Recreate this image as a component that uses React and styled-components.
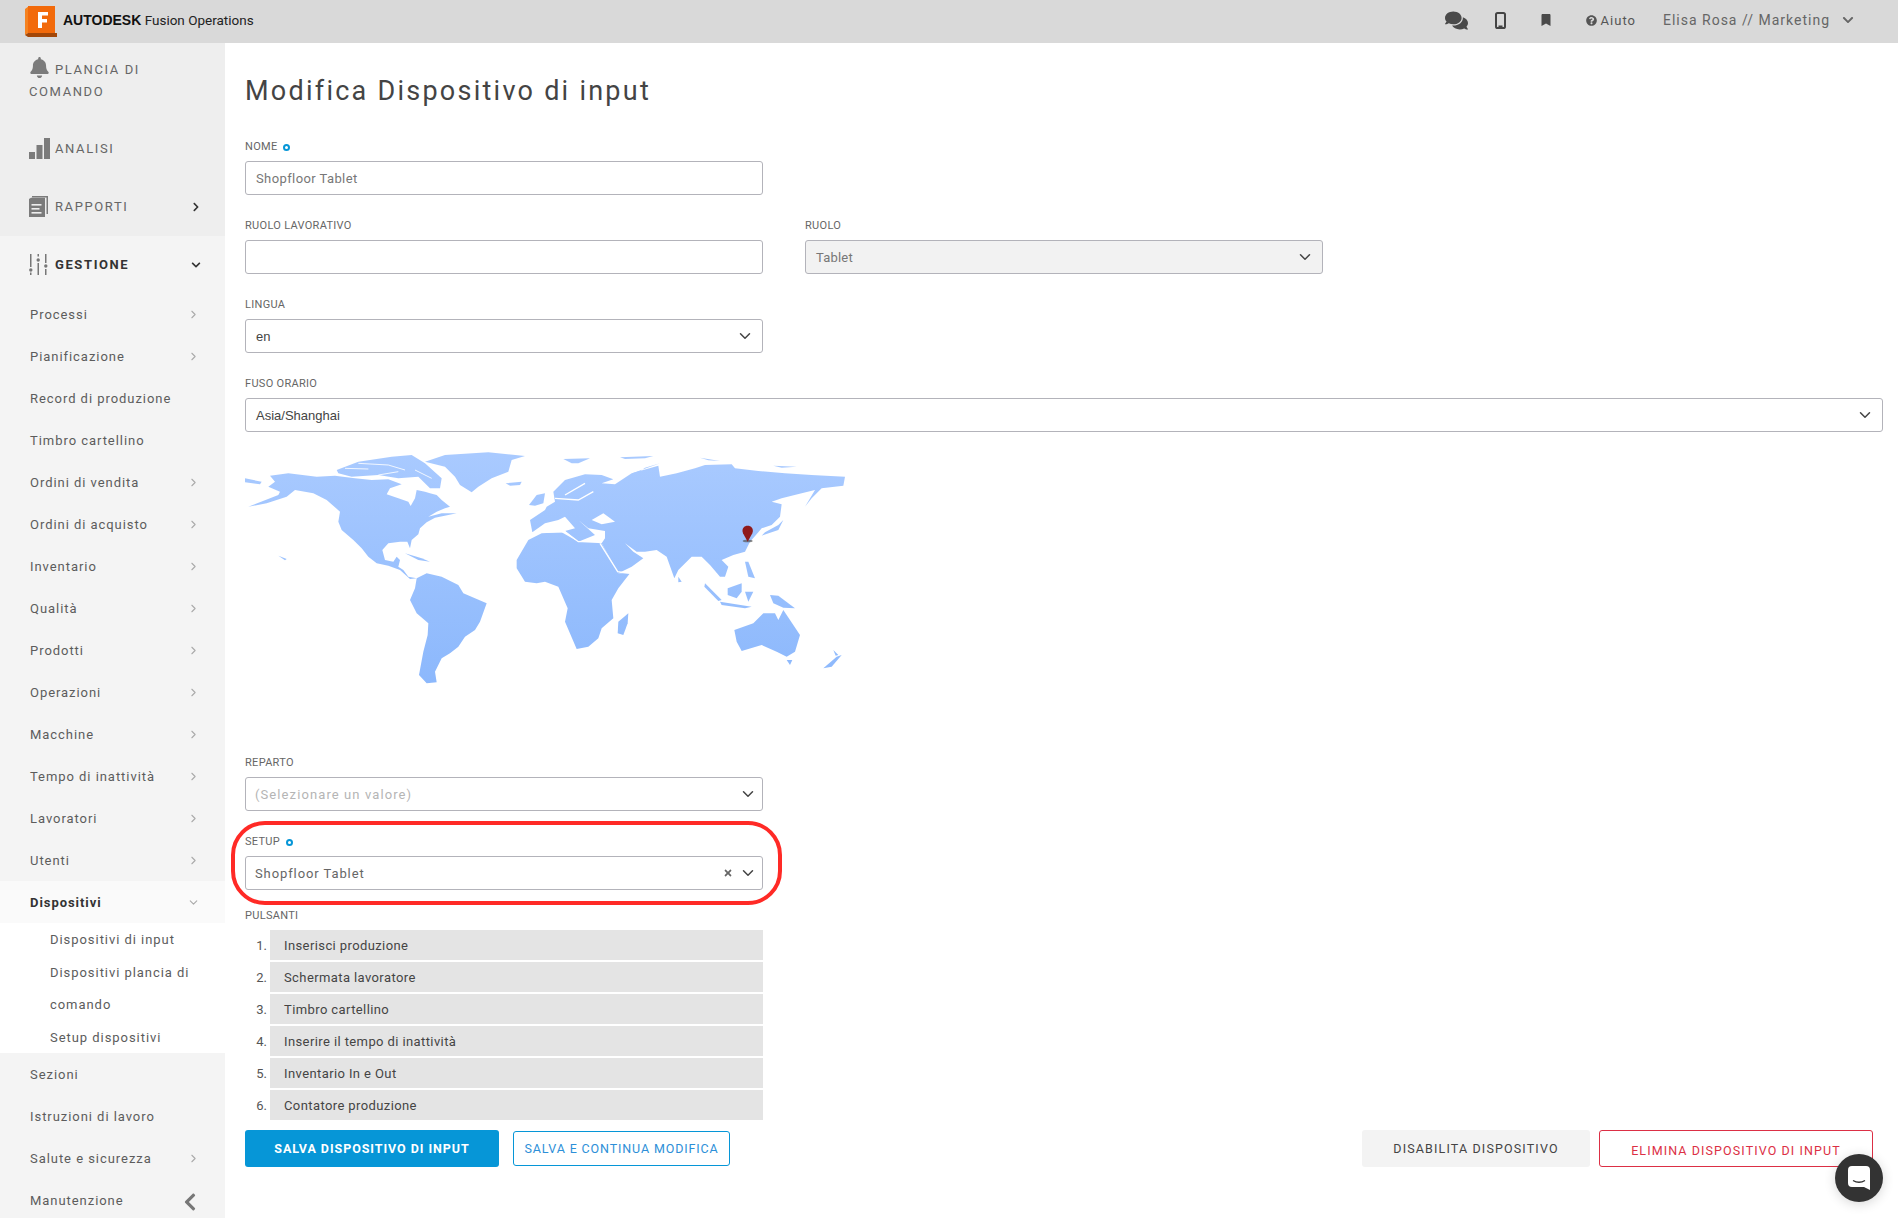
import styled, { createGlobalStyle } from 'styled-components'
import { FaBell, FaBookmark, FaChevronDown, FaChevronLeft, FaChevronRight, FaComments, FaQuestionCircle, FaTimes } from 'react-icons/fa'
import { FiChevronDown, FiChevronRight } from 'react-icons/fi'

const GlobalStyle = createGlobalStyle`
  html, body {
    margin: 0;
    padding: 0;
    background: #fff;
    font-family: 'Roboto', 'Noto Sans', sans-serif;
    color: #555;
  }
  * { box-sizing: border-box; }
`

const Page = styled.div`
  width: 1898px;
  height: 1218px;
  overflow: hidden;
  position: relative;
  display: flex;
  flex-direction: column;
`

const TopBar = styled.header`
  height: 43px;
  flex: none;
  background: #d9d9d9;
  display: flex;
  align-items: center;
  padding-left: 25px;
`

const Brand = styled.div`
  display: flex;
  align-items: center;
  gap: 5px;
  font-size: 13.5px;
  color: #222;
`

const BrandText = styled.span`
  margin-top: -3px;
`

const BrandName = styled.span`
  font-family: 'Liberation Sans', sans-serif;
  font-weight: 700;
  font-size: 14px;
  color: #111;
`

const TopActions = styled.div`
  margin-left: auto;
  display: flex;
  align-items: center;
  color: #4a4a4a;
  padding: 0 44px 3px 0;
`

const TopIcon = styled.span`
  display: flex;
  margin-right: ${(p) => p.$gap}px;
`

const HelpLink = styled.span`
  display: flex;
  align-items: center;
  gap: 4px;
  font-size: 13px;
  letter-spacing: 1px;
  color: #555;
  margin-right: 27px;
`

const UserMenu = styled.span`
  display: flex;
  align-items: center;
  gap: 12px;
  font-size: 14px;
  letter-spacing: 1px;
  color: #666;
`

const Body = styled.div`
  flex: 1;
  display: flex;
  min-height: 0;
`

const Sidebar = styled.nav`
  width: 225px;
  flex: none;
  background: #f4f4f4;
  overflow: hidden;
`

const TopGroup = styled.div`
  background: #eeeeee;
  height: 193px;
`

const MainItem = styled.div`
  height: ${(p) => p.$height}px;
  padding: ${(p) => p.$top}px 20px 0 29px;
  display: flex;
  align-items: center;
  gap: 5px;
  font-size: 13px;
  letter-spacing: 1.6px;
  color: ${(p) => (p.$active ? '#333' : '#666')};
  font-weight: ${(p) => (p.$active ? 700 : 400)};
`

const IconSlot = styled.span`
  width: 21px;
  flex: none;
  display: flex;
`

const WrappedItem = styled.div`
  height: 82px;
  padding: 14px 20px 0 29px;
  font-size: 13px;
  line-height: 22px;
  letter-spacing: 1.6px;
  color: #666;

  svg {
    vertical-align: -4px;
    margin-right: 5px;
  }
`

const ItemEnd = styled.span`
  margin-left: auto;
  display: flex;
  color: #333;
  padding-right: 4px;
`

const SubItem = styled.div`
  height: 42px;
  display: flex;
  align-items: center;
  padding: 0 25px 0 30px;
  font-size: 13px;
  letter-spacing: 0.95px;
  font-weight: ${(p) => (p.$active ? 700 : 400)};
  color: ${(p) => (p.$active ? '#333' : '#5c5c5c')};
  background: ${(p) => (p.$active ? '#fafafa' : 'transparent')};
`

const SubEnd = styled.span`
  margin-left: auto;
  display: flex;
  color: #aaa;
`

const Submenu = styled.div`
  background: #fff;
  padding: 1px 20px 0 50px;
  height: 130px;
`

const SubLink = styled.div`
  font-size: 13px;
  line-height: 32.5px;
  letter-spacing: 0.95px;
  color: #5c5c5c;
`

const CollapseButton = styled.span`
  position: absolute;
  left: 180px;
  top: 1192px;
  color: #777;
  display: flex;
`

const Main = styled.main`
  flex: 1;
  min-width: 0;
  padding: 31px 15px 0 20px;
`

const Title = styled.h1`
  margin: 0 0 28px;
  font-size: 27px;
  line-height: 34px;
  font-weight: 400;
  letter-spacing: 2.25px;
  color: #444;
`

const Row = styled.div`
  display: grid;
  grid-template-columns: 518px 518px;
  column-gap: 42px;
`

const Field = styled.div`
  width: ${(p) => (p.$wide ? '100%' : '518px')};
  margin-bottom: ${(p) => p.$after ?? 20}px;
`

const Label = styled.div`
  height: 25px;
  padding: 4px 0 7px;
  font-size: 11px;
  line-height: 14px;
  letter-spacing: 0.3px;
  color: #666;
  display: flex;
  gap: 6px;
  align-items: center;
`

const Required = styled.i`
  width: 7px;
  height: 7px;
  border-radius: 50%;
  border: 2px solid #0696d7;
`

const Control = styled.div`
  height: 34px;
  border: 1px solid #b3b3ba;
  border-radius: 3px;
  background: ${(p) => (p.$disabled ? '#f2f2f2' : '#fff')};
  display: flex;
  align-items: center;
  padding: ${(p) => (p.$tight ? '0 5px 0 9px' : '0 8px 0 10px')};
  font-size: 13px;
  letter-spacing: ${(p) => p.$track ?? 0}px;
  font-family: ${(p) => (p.$plain ? "'Liberation Sans', sans-serif" : 'inherit')};
  color: ${(p) => p.$color ?? '#777'};
`

const ControlEnd = styled.span`
  margin-left: auto;
  display: flex;
  align-items: center;
  gap: 6px;
  color: #444;
`

const ClearIcon = styled.span`
  display: flex;
  color: #666;
`

const MapBox = styled.div`
  width: 600px;
  height: 250px;
  margin-bottom: 57px;
`

const Highlighted = styled.div`
  position: relative;
  width: 518px;

  &::after {
    content: '';
    position: absolute;
    inset: -10px -19px -15px -14px;
    border: 4px solid #ff2a26;
    border-radius: 34px;
    pointer-events: none;
  }
`

const ButtonList = styled.ol`
  list-style: none;
  margin: 0;
  padding: 0;
  width: 518px;
  display: flex;
  flex-direction: column;
  gap: 2px;
`

const ButtonRow = styled.li`
  display: grid;
  grid-template-columns: 25px 1fr;
  height: 30px;
`

const RowNumber = styled.span`
  display: flex;
  align-items: center;
  justify-content: flex-end;
  padding-right: 3px;
  font-size: 13px;
  color: #555;
`

const RowName = styled.span`
  display: flex;
  align-items: center;
  background: #e4e4e4;
  padding-left: 14px;
  font-size: 13px;
  letter-spacing: 0.4px;
  color: #444;
`

const Actions = styled.div`
  margin: 10px 10px 0 0;
  display: flex;
  align-items: center;
`

const Button = styled.button`
  height: ${(p) => p.$h ?? 37}px;
  width: ${(p) => p.$w}px;
  margin-right: ${(p) => p.$after ?? 0}px;
  margin-left: ${(p) => (p.$push ? 'auto' : '0')};
  padding: ${(p) => p.$drop ?? 0}px 0 0;
  border-radius: 3px;
  border: 1px solid ${(p) => p.$border ?? 'transparent'};
  background: ${(p) => p.$bg ?? '#fff'};
  color: ${(p) => p.$color};
  font-family: inherit;
  font-size: 12.5px;
  font-weight: ${(p) => p.$weight ?? 400};
  letter-spacing: ${(p) => p.$track}px;
`

const ChatBubble = styled.div`
  position: absolute;
  left: 1835px;
  top: 1154px;
  width: 48px;
  height: 48px;
  border-radius: 50%;
  background: #333;
  box-shadow: 0 2px 12px rgba(0, 0, 0, 0.16);
  display: flex;
  align-items: center;
  justify-content: center;
`

function LogoMark() {
  return (
    <svg width="33" height="31" viewBox="0 0 33 31">
      <path d="M0 3 L4 0 H30 V27 H3 L0 29 Z" fill="#f58220" />
      <path d="M3 27 H32 V31 H3 L0 29 Z" fill="#a34708" />
      <rect x="3" y="0" width="27" height="27" fill="#f26a0b" />
      <path d="M13 6 H23 V9.5 H17 V13 H22 V16.5 H17 V22 H13 Z" fill="#fff" />
    </svg>
  )
}

function PhoneIcon() {
  return (
    <svg width="11" height="17" viewBox="0 0 11 17">
      <rect x="1" y="1" width="9" height="15" rx="1.6" fill="none" stroke="#444" strokeWidth="2" />
      <rect x="3.5" y="13.5" width="4" height="2" fill="#444" />
    </svg>
  )
}

function BarsIcon() {
  return (
    <svg width="21" height="21" viewBox="0 0 21 21" fill="#7b7b7b">
      <rect x="0" y="14" width="6" height="7" />
      <rect x="7.5" y="7" width="6" height="14" />
      <rect x="15" y="0" width="6" height="21" />
    </svg>
  )
}

function ReportIcon() {
  return (
    <svg width="19" height="21" viewBox="0 0 19 21" fill="#7b7b7b">
      <path d="M3 0 H19 V18 H17.5 V1.5 H3 Z" />
      <path d="M0 3 L2 1.8 H16 V21 H0 Z" />
      <rect x="2.5" y="8" width="10" height="1.6" fill="#eee" />
      <rect x="2.5" y="12" width="8" height="1.6" fill="#eee" />
      <rect x="2.5" y="16" width="10" height="1.6" fill="#eee" />
    </svg>
  )
}

function SlidersIcon() {
  return (
    <svg width="19" height="21" viewBox="0 0 19 21" fill="#777">
      <rect x="1" y="0" width="1.5" height="13" />
      <circle cx="1.8" cy="16" r="1.7" />
      <rect x="1" y="18.5" width="1.5" height="2.5" />
      <rect x="8.5" y="0" width="1.5" height="2.5" />
      <circle cx="9.2" cy="6" r="1.7" />
      <rect x="8.5" y="9" width="1.5" height="12" />
      <rect x="16" y="0" width="1.5" height="9" />
      <circle cx="16.8" cy="12" r="1.7" />
      <rect x="16" y="15" width="1.5" height="6" />
    </svg>
  )
}

function WorldMap() {
  // traced by hand from two 3x crops, the eastern half sits in its own group
  return (
    <svg width="600" height="250" viewBox="0 0 1800 750">
      <defs>
        <linearGradient id="land" gradientUnits="userSpaceOnUse" x1="0" y1="30" x2="0" y2="715">
          <stop offset="0" stopColor="#a9caff" />
          <stop offset="1" stopColor="#8cb8fc" />
        </linearGradient>
      </defs>
      <g fill="url(#land)">
        <path d="M75 92 L130 85 L215 95 L270 92 L330 100 L380 105 L430 103 L470 118 L435 130 L425 148 L460 160 L490 170 L497 183 L510 160 L515 135 L540 140 L555 145 L575 150 L590 165 L615 185 L600 190 L575 200 L550 215 L590 205 L635 205 L610 210 L570 218 L545 232 L525 250 L520 268 L500 285 L495 310 L487 290 L465 290 L430 295 L412 315 L420 345 L445 350 L455 335 L465 345 L460 365 L475 375 L490 395 L515 400 L495 402 L465 375 L430 362 L395 355 L370 335 L350 310 L325 285 L290 255 L280 230 L285 200 L245 165 L205 145 L150 135 L125 155 L65 175 L10 185 L100 150 L105 140 L70 125 L90 110 Z" />
        <path d="M0 100 L50 110 L45 118 L0 112 Z" />
        <path d="M275 75 L340 50 L440 35 L500 30 L540 55 L590 100 L585 130 L555 130 L520 95 L460 100 L400 90 L320 95 L280 85 Z" />
        <path d="M540 50 L600 30 L730 22 L840 33 L800 45 L790 80 L740 100 L700 125 L680 142 L645 120 L630 95 L600 65 Z" />
        <path d="M782 115 L830 110 L825 120 L795 122 Z" />
        <path d="M480 325 L530 340 L555 350 L520 345 Z" />
        <path d="M100 332 L125 342 L120 346 Z" />
        <path d="M515 400 L545 385 L590 395 L640 420 L655 445 L725 475 L705 530 L690 555 L660 575 L640 605 L615 625 L590 640 L570 680 L575 712 L545 715 L522 690 L535 620 L548 570 L550 535 L515 505 L495 465 L510 430 Z" />
        <path d="M852 180 L875 150 L900 145 L895 175 L870 182 Z" />
      </g>
      <g fill="none" stroke="#fff" strokeWidth="2.5">
        <path d="M300 70 L370 72" />
        <path d="M340 55 L430 60 L480 75" />
        <path d="M400 90 L460 80" />
        <path d="M510 75 L560 100" />
      </g>
      <g transform="translate(900 0)">
        <g fill="url(#land)">
          <path d="M-45 225 L0 195 L5 185 L30 170 L25 140 L60 105 L120 88 L170 90 L205 103 L170 115 L210 118 L260 85 L340 62 L345 95 L395 85 L450 70 L480 60 L560 58 L570 70 L640 78 L720 85 L800 90 L900 95 L895 122 L830 130 L800 160 L780 185 L810 135 L770 145 L710 160 L680 170 L710 178 L705 215 L680 240 L650 250 L640 262 L615 290 L600 320 L565 330 L530 345 L550 365 L540 395 L525 395 L495 360 L470 335 L440 335 L400 375 L388 400 L365 335 L335 315 L300 320 L275 320 L240 295 L265 320 L295 340 L260 365 L220 385 L170 295 L180 280 L180 258 L130 250 L100 225 L150 270 L100 290 L60 258 L90 250 L60 215 L40 225 L0 235 L-38 262 Z" />
          <path d="M-85 345 L-50 285 L-10 265 L50 262 L100 290 L170 295 L220 385 L255 385 L220 430 L200 465 L205 520 L170 550 L160 580 L130 605 L95 612 L60 530 L68 490 L40 425 L0 410 L-25 415 L-60 410 L-85 370 Z" />
          <path d="M262 85 L345 55 L300 68 L270 90 Z" />
          <path d="M55 42 L135 40 L100 55 L80 55 Z" />
          <path d="M225 37 L325 33 L300 40 L240 42 Z" />
          <path d="M465 38 L525 48 L490 46 Z" />
          <path d="M685 62 L755 65 L710 68 Z" />
          <path d="M700 240 L715 225 L700 255 L650 272 L660 262 Z" />
          <path d="M600 350 L610 350 L630 400 L610 395 Z" />
          <path d="M548 430 L590 415 L590 440 L575 460 L548 450 Z" />
          <path d="M480 415 L530 465 L520 468 L478 425 Z" />
          <path d="M525 470 L620 485 L600 490 L530 480 Z" />
          <path d="M600 440 L625 440 L610 470 Z" />
          <path d="M675 450 L700 452 L750 490 L715 488 L685 475 Z" />
          <path d="M568 555 L625 535 L655 505 L690 505 L700 525 L715 495 L765 570 L750 620 L725 635 L695 620 L650 600 L590 618 L575 590 Z" />
          <path d="M725 645 L742 645 L735 660 Z" />
          <path d="M218 565 L220 530 L250 505 L248 535 L235 570 Z" />
          <path d="M835 670 L875 635 L890 630 L860 665 Z" />
          <path d="M865 615 L880 630 L872 632 Z" />
          <path d="M400 395 L410 410 L400 412 Z" />
        </g>
        <path d="M140 225 L175 205 L210 230 L170 238 Z" fill="#fff" />
        <g fill="none" stroke="#fff" strokeWidth="4">
          <path d="M165 295 L218 380 L255 385" />
          <path d="M60 150 L120 115" />
          <path d="M30 160 L100 165 L145 140" />
          <path d="M-40 263 L60 260 L100 290 L170 290" />
        </g>
        <ellipse cx="608" cy="288" rx="15" ry="4" fill="#555" opacity="0.7" />
        <path d="M608 290 L594 265 C583 235 633 235 622 265 Z" fill="#8f1a1c" />
      </g>
    </svg>
  )
}

const manageItems = [
  ['Processi', true],
  ['Pianificazione', true],
  ['Record di produzione', false],
  ['Timbro cartellino', false],
  ['Ordini di vendita', true],
  ['Ordini di acquisto', true],
  ['Inventario', true],
  ['Qualità', true],
  ['Prodotti', true],
  ['Operazioni', true],
  ['Macchine', true],
  ['Tempo di inattività', true],
  ['Lavoratori', true],
  ['Utenti', true],
]

const lastItems = [
  ['Sezioni', false],
  ['Istruzioni di lavoro', false],
  ['Salute e sicurezza', true],
  ['Manutenzione', false],
]

const deviceButtons = [
  'Inserisci produzione',
  'Schermata lavoratore',
  'Timbro cartellino',
  'Inserire il tempo di inattività',
  'Inventario In e Out',
  'Contatore produzione',
]

function NavRow({ name, arrow }) {
  return (
    <SubItem>
      {name}
      {arrow && (
        <SubEnd>
          <FiChevronRight size={13} />
        </SubEnd>
      )}
    </SubItem>
  )
}

function App() {
  return (
    <Page>
      <GlobalStyle />
      <TopBar>
        <Brand>
          <LogoMark />
          <BrandText>
            <BrandName>AUTODESK</BrandName> Fusion Operations
          </BrandText>
        </Brand>
        <TopActions>
          <TopIcon $gap={27}>
            <FaComments size={23} />
          </TopIcon>
          <TopIcon $gap={34}>
            <PhoneIcon />
          </TopIcon>
          <TopIcon $gap={34}>
            <FaBookmark size={12} />
          </TopIcon>
          <HelpLink>
            <FaQuestionCircle size={11} />
            Aiuto
          </HelpLink>
          <UserMenu>
            Elisa Rosa // Marketing
            <FaChevronDown size={12} />
          </UserMenu>
        </TopActions>
      </TopBar>
      <Body>
        <Sidebar>
          <TopGroup>
            <WrappedItem>
              <FaBell size={21} color="#7b7b7b" />
              PLANCIA DI COMANDO
            </WrappedItem>
            <MainItem $height={46} $top={0}>
              <IconSlot>
                <BarsIcon />
              </IconSlot>
              ANALISI
            </MainItem>
            <MainItem $height={65} $top={6}>
              <IconSlot>
                <ReportIcon />
              </IconSlot>
              RAPPORTI
              <ItemEnd>
                <FaChevronRight size={10} />
              </ItemEnd>
            </MainItem>
          </TopGroup>
          <MainItem $height={57} $top={0} $active>
            <IconSlot>
              <SlidersIcon />
            </IconSlot>
            GESTIONE
            <ItemEnd>
              <FaChevronDown size={10} />
            </ItemEnd>
          </MainItem>
          {manageItems.map(([name, arrow]) => (
            <NavRow key={name} name={name} arrow={arrow} />
          ))}
          <SubItem $active>
            Dispositivi
            <SubEnd>
              <FiChevronDown size={13} />
            </SubEnd>
          </SubItem>
          <Submenu>
            <SubLink>Dispositivi di input</SubLink>
            <SubLink>Dispositivi plancia di comando</SubLink>
            <SubLink>Setup dispositivi</SubLink>
          </Submenu>
          {lastItems.map(([name, arrow]) => (
            <NavRow key={name} name={name} arrow={arrow} />
          ))}
        </Sidebar>
        <Main>
          <Title>Modifica Dispositivo di input</Title>
          <Field>
            <Label>
              NOME <Required />
            </Label>
            <Control $track={0.4}>Shopfloor Tablet</Control>
          </Field>
          <Row>
            <Field>
              <Label>RUOLO LAVORATIVO</Label>
              <Control />
            </Field>
            <Field>
              <Label>RUOLO</Label>
              <Control $disabled $track={0.2}>
                Tablet
                <ControlEnd>
                  <FiChevronDown size={18} />
                </ControlEnd>
              </Control>
            </Field>
          </Row>
          <Field>
            <Label>LINGUA</Label>
            <Control $plain $color="#444">
              en
              <ControlEnd>
                <FiChevronDown size={18} />
              </ControlEnd>
            </Control>
          </Field>
          <Field $wide $after={13}>
            <Label>FUSO ORARIO</Label>
            <Control $plain $color="#444">
              Asia/Shanghai
              <ControlEnd>
                <FiChevronDown size={18} />
              </ControlEnd>
            </Control>
          </Field>
          <MapBox>
            <WorldMap />
          </MapBox>
          <Field>
            <Label>REPARTO</Label>
            <Control $tight $track={1.1} $color="#b5b5b5">
              (Selezionare un valore)
              <ControlEnd>
                <FiChevronDown size={18} />
              </ControlEnd>
            </Control>
          </Field>
          <Highlighted>
            <Field $after={15}>
              <Label>
                SETUP <Required />
              </Label>
              <Control $tight $track={0.9} $color="#666">
                Shopfloor Tablet
                <ControlEnd>
                  <ClearIcon>
                    <FaTimes size={10} />
                  </ClearIcon>
                  <FiChevronDown size={18} />
                </ControlEnd>
              </Control>
            </Field>
          </Highlighted>
          <Label>PULSANTI</Label>
          <ButtonList>
            {deviceButtons.map((name, i) => (
              <ButtonRow key={name}>
                <RowNumber>{i + 1}.</RowNumber>
                <RowName>{name}</RowName>
              </ButtonRow>
            ))}
          </ButtonList>
          <Actions>
            <Button $w={254} $track={0.95} $bg="#0696d7" $color="#fff" $weight={700} $after={14}>
              SALVA DISPOSITIVO DI INPUT
            </Button>
            <Button $w={217} $h={35} $track={0.87} $border="#0696d7" $color="#2d8fd8">
              SALVA E CONTINUA MODIFICA
            </Button>
            <Button $w={228} $track={1.15} $push $bg="#f3f3f3" $color="#444" $after={9}>
              DISABILITA DISPOSITIVO
            </Button>
            <Button $w={274} $track={1.1} $drop={3} $border="#dc2f45" $color="#dc2f45">
              ELIMINA DISPOSITIVO DI INPUT
            </Button>
          </Actions>
        </Main>
      </Body>
      <CollapseButton>
        <FaChevronLeft size={20} />
      </CollapseButton>
      <ChatBubble>
        <svg width="22" height="24" viewBox="0 0 22 24">
          <path d="M4 0 H18 A4 4 0 0 1 22 4 V24 L16 21 H4 A4 4 0 0 1 0 17 V4 A4 4 0 0 1 4 0 Z" fill="#fff" />
          <path d="M5 14.5 Q11 18 17 14.5" stroke="#333" strokeWidth="1.4" fill="none" />
        </svg>
      </ChatBubble>
    </Page>
  )
}

export default App
